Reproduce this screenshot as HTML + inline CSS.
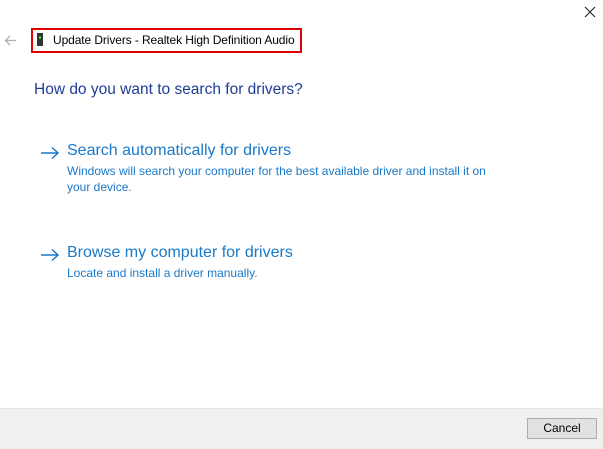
<!DOCTYPE html>
<html><head><style>
body{margin:0;width:603px;height:448px;background:#fff;position:relative;overflow:hidden;font-family:"Liberation Sans",sans-serif;}
.abs{position:absolute;white-space:nowrap;}
</style></head><body>
<svg class="abs" style="left:584px;top:6px" width="12" height="12"><path d="M1 1L11 11M11 1L1 11" stroke="#222" stroke-width="1.1"/></svg>
<svg class="abs" style="left:4px;top:35px" width="13" height="11"><path d="M1 5.5H12M6 1L1.5 5.5L6 10" stroke="#b0b0b0" stroke-width="1.3" fill="none"/></svg>
<div class="abs" style="left:31px;top:28px;width:267px;height:21px;border:2px solid #e00000;"></div>
<div class="abs" style="left:37px;top:33px;width:6px;height:13px;background:#333;"></div>
<div class="abs" style="left:39px;top:36px;width:2px;height:3px;background:#2fd02f;"></div>
<div class="abs" style="left:53px;top:33px;font-size:12px;color:#000;letter-spacing:-0.1px;">Update Drivers - Realtek High Definition Audio</div>
<div class="abs" style="left:34px;top:81px;font-size:15.5px;color:#1e3d96;">How do you want to search for drivers?</div>
<svg class="abs" style="left:40px;top:146px" width="20" height="14"><path d="M1 7H18M12 1.5L18 7L12 12.5" stroke="#1979ca" stroke-width="1.5" fill="none"/></svg>
<div class="abs" style="left:67px;top:142px;font-size:16px;color:#1979ca;">Search automatically for drivers</div>
<div class="abs" style="left:67px;top:163px;font-size:12px;line-height:16px;color:#1979ca;">Windows will search your computer for the best available driver and install it on<br>your device.</div>
<svg class="abs" style="left:40px;top:248px" width="20" height="14"><path d="M1 7H18M12 1.5L18 7L12 12.5" stroke="#1979ca" stroke-width="1.5" fill="none"/></svg>
<div class="abs" style="left:67px;top:244px;font-size:16px;color:#1979ca;">Browse my computer for drivers</div>
<div class="abs" style="left:67px;top:265px;font-size:12px;line-height:16px;color:#1979ca;">Locate and install a driver manually.</div>
<div class="abs" style="left:0;top:408px;width:603px;height:40px;background:#f0f0f0;border-top:1px solid #e6e6e6;"></div>
<div class="abs" style="left:527px;top:418px;width:68px;height:19px;background:#e1e1e1;border:1px solid #adadad;font-size:12px;text-align:center;line-height:19px;color:#000;">Cancel</div>
</body></html>
